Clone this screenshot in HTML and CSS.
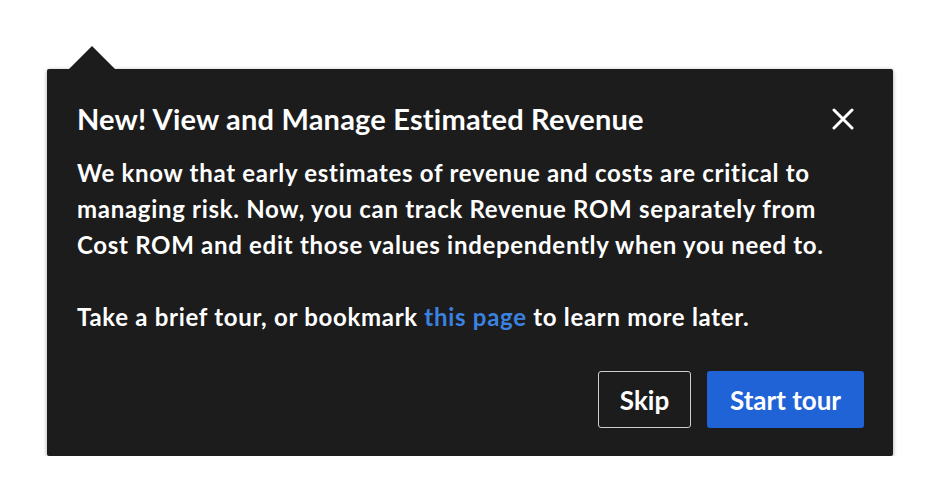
FILE: index.html
```html
<!DOCTYPE html>
<html lang="en">
<head>
    <meta charset="UTF-8">
    <title>Tour popover</title>
    <link rel="stylesheet" href="styles.css">
</head>
<body>
    <div class="popover">
        <div class="popover-header">
            <h2 class="popover-title">New! View and Manage Estimated Revenue</h2>
            <button class="btn-close" aria-label="Close">
                <svg width="22" height="22" viewBox="0 0 22 22">
                    <path d="M2 2 L20 20 M20 2 L2 20" stroke="#fff" stroke-width="3" stroke-linecap="round"/>
                </svg>
            </button>
        </div>
        <p class="popover-text">We know that early estimates of revenue and costs are critical to managing risk. Now, you can track Revenue ROM separately from Cost ROM and edit those values independently when you need to.</p>
        <p class="popover-text">Take a brief tour, or bookmark <a href="#">this page</a> to learn more later.</p>
        <div class="popover-actions">
            <button class="btn btn-skip">Skip</button>
            <button class="btn btn-primary">Start tour</button>
        </div>
    </div>
</body>
</html>
```

FILE: styles.css
```css
* {
    margin: 0;
    padding: 0;
    box-sizing: border-box;
}

body {
    font-family: Lato, 'Open Sans', sans-serif;
    background: #fff;
    padding: 69px 47px 0 47px;
}

.popover {
    position: relative;
    width: 846px;
    background: #1c1c1c;
    border-radius: 2px;
    padding: 32px 29px 28px 30px;
    color: #fff;
    box-shadow: 0 1px 4px rgba(0, 0, 0, 0.35);
}

.popover::before {
    content: '';
    position: absolute;
    top: -23px;
    left: 22px;
    border-left: 23px solid transparent;
    border-right: 23px solid transparent;
    border-bottom: 23px solid #1c1c1c;
}

.popover-header {
    display: flex;
    justify-content: space-between;
    align-items: center;
    margin-bottom: 18px;
}

.popover-title {
    font-size: 29px;
    font-weight: 700;
    line-height: 36px;
    letter-spacing: 0.2px;
}

.btn-close {
    background: none;
    border: none;
    cursor: pointer;
    display: flex;
    margin-right: 10px;
}

.popover-text {
    font-size: 24px;
    font-weight: 700;
    line-height: 36px;
    letter-spacing: 0.7px;
    margin-bottom: 36px;
}

.popover-text a {
    color: #3b82e0;
    text-decoration: none;
}

.popover-actions {
    display: flex;
    justify-content: flex-end;
    gap: 16px;
    margin-top: 3px;
}

.btn {
    height: 57px;
    font-family: Lato, sans-serif;
    font-size: 26px;
    font-weight: 700;
    color: #fff;
    border-radius: 3px;
    cursor: pointer;
}

.btn-skip {
    width: 93px;
    background: #1c1c1c;
    border: 1px solid #cfcfcf;
}

.btn-primary {
    width: 157px;
    background: #1f63d6;
    border: none;
}
```
